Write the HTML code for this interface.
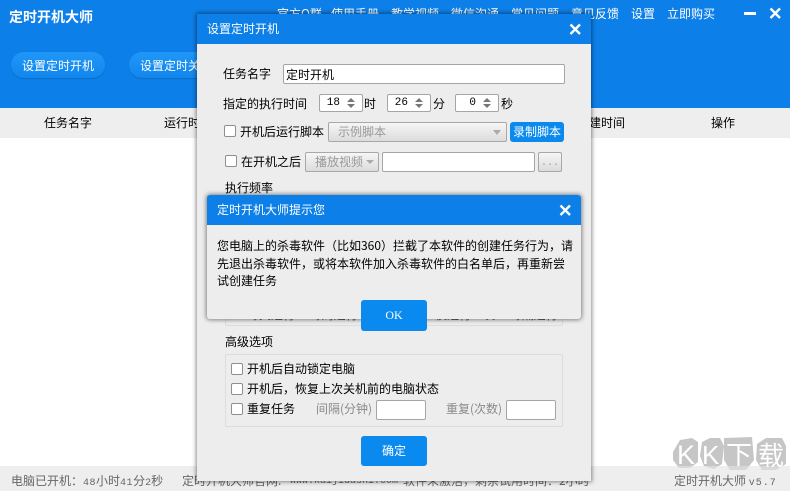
<!DOCTYPE html>
<html><head><meta charset="utf-8"><style>
html,body{margin:0;padding:0;width:790px;height:491px;overflow:hidden;background:#fff}
body{position:relative;font:12px/16px "WenQuanYi Zen Hei","Noto Sans CJK SC",sans-serif;color:#000}
.a{position:absolute;white-space:nowrap}
.n{color:#fff;top:6px;line-height:16px}
.pill{position:absolute;top:52px;height:26px;border-radius:13px;background:linear-gradient(#2097f8,#1186ee);box-shadow:0 1px 1px #0a6cc6;color:#fff;line-height:28px;text-align:center}
.inp{position:absolute;background:#fff;border:1px solid #a5a5a5;border-radius:2px;box-sizing:border-box}
.cb{position:absolute;width:12px;height:12px;box-sizing:border-box;background:#fff;border:1px solid #8f8f8f;border-radius:2px}
.spin{position:absolute;top:94px;width:44px;height:18px;box-sizing:border-box;background:#fff;border:1px solid #a5a5a5;border-radius:2px;font:11px/17px "Liberation Mono",monospace;text-align:right;padding-right:22px}
.spin:after,.spin:before{content:"";position:absolute;right:7px;border-left:4px solid transparent;border-right:4px solid transparent}
.spin:before{top:3px;border-bottom:4px solid #777}
.spin:after{top:9px;border-top:4px solid #777}
.btn{position:absolute;background:#0a8aee;color:#fff;border-radius:3px;text-align:center}
.g{color:#8a8a8a}
.gb{position:absolute;box-sizing:border-box;border:1px solid #a8a8a8;border-radius:2px;background:linear-gradient(#f6f6f6,#dcdcdc);color:#999}
.st{color:#666;top:473px}
.m{font-family:"Liberation Mono",monospace;font-size:10px}
</style></head><body>
<!-- main header -->
<div class="a" style="left:0;top:0;width:790px;height:108px;background:#0d7fe8"></div>
<div class="a" style="left:9px;top:8px;font-size:14px;font-weight:bold;color:#fff;line-height:18px">定时开机大师</div>
<div class="a n" style="left:277px">官方Q群</div>
<div class="a n" style="left:331px">使用手册</div>
<div class="a n" style="left:391px">教学视频</div>
<div class="a n" style="left:451px">微信沟通</div>
<div class="a n" style="left:511px">常见问题</div>
<div class="a n" style="left:571px">意见反馈</div>
<div class="a n" style="left:631px">设置</div>
<div class="a n" style="left:667px">立即购买</div>
<div class="a" style="left:744px;top:12px;width:12px;height:3px;background:#fff"></div>
<svg class="a" style="left:769px;top:7px" width="13" height="13"><path d="M1.5 1.5L11 11M11 1.5L1.5 11" stroke="#fff" stroke-width="2.4"/></svg>
<div class="pill" style="left:11px;width:94px">设置定时开机</div>
<div class="pill" style="left:129px;width:94px">设置定时关机</div>
<!-- table header -->
<div class="a" style="left:0;top:108px;width:790px;height:30px;background:#eee"></div>
<div class="a" style="left:44px;top:115px">任务名字</div>
<div class="a" style="left:164px;top:115px">运行时间</div>
<div class="a" style="left:577px;top:115px">创建时间</div>
<div class="a" style="left:711px;top:115px">操作</div>
<!-- status -->
<div class="a" style="left:0;top:466px;width:790px;height:25px;background:#eee"></div>
<!-- watermark -->
<svg class="a" style="left:670px;top:432px" width="120" height="59">
<g fill="#c6c6c6">
<path d="M3 20L10 8L22 6L28 10L28 30L20 36L9 36L3 28Z"/>
<path d="M32 10L40 6L50 6L54 14L52 32L44 37L34 34L30 24Z"/>
<path d="M54 6L82 5L84 28L76 38L60 38L54 28Z"/>
<path d="M87 12L96 6L112 6L116 14L116 32L106 38L92 38L86 28Z"/>
</g>
<g fill="#fff" font-family="'Liberation Sans',sans-serif">
<text x="7" y="32" font-size="27">K</text>
<text x="32" y="32" font-size="26">K</text>
<text x="56" y="32" font-size="26" font-family="'WenQuanYi Zen Hei','Noto Sans CJK SC',sans-serif">下</text>
<text x="88" y="33" font-size="26" font-family="'WenQuanYi Zen Hei','Noto Sans CJK SC',sans-serif">载</text>
</g></svg>
<div class="a" style="left:0;top:466px;width:790px;height:25px;background:rgba(238,238,238,.45)"></div>
<div class="a st" style="left:11px">电脑已开机：<span class="m" style="letter-spacing:.5px">48</span>小时<span class="m" style="letter-spacing:.5px">41</span>分<span class="m">2</span>秒</div>
<div class="a st" style="left:182px">定时开机大师官网:</div>
<div class="a st m" style="left:290px;top:474px">www.kaijidashi.com</div>
<div class="a st" style="left:403px">软件未激活，剩余试用时间：2小时</div>
<div class="a st" style="left:674px">定时开机大师 <span class="m" style="letter-spacing:1px">v5.7</span></div>

<!-- settings dialog -->
<div class="a" style="left:197px;top:14px;width:394px;height:467px;background:#ededed;box-shadow:0 0 4px 1px rgba(0,0,0,.45)"></div>
<div class="a" style="left:197px;top:14px;width:394px;height:30px;background:#0d7fe8"></div>
<div class="a" style="left:207px;top:21px;color:#fff">设置定时开机</div>
<svg class="a" style="left:569px;top:23px" width="13" height="13"><path d="M1.5 1.5L11 11M11 1.5L1.5 11" stroke="#fff" stroke-width="2.4"/></svg>

<div class="a" style="left:223px;top:66px">任务名字</div>
<div class="inp" style="left:283px;top:64px;width:282px;height:20px;padding:2px 2px;line-height:15px">定时开机</div>

<div class="a" style="left:223px;top:96px">指定的执行时间</div>
<div class="spin" style="left:319px">18</div><div class="a" style="left:364px;top:96px">时</div>
<div class="spin" style="left:387px">26</div><div class="a" style="left:433px;top:96px">分</div>
<div class="spin" style="left:455px">0</div><div class="a" style="left:501px;top:96px">秒</div>

<div class="cb" style="left:224px;top:125px"></div>
<div class="a" style="left:240px;top:124px">开机后运行脚本</div>
<div class="gb" style="left:328px;top:122px;width:179px;height:20px;padding:1px 9px;line-height:16px">示例脚本</div>
<div class="a" style="left:493px;top:130px;border-left:4px solid transparent;border-right:4px solid transparent;border-top:5px solid #aaa"></div>
<div class="btn" style="left:510px;top:122px;width:54px;height:20px;line-height:20px">录制脚本</div>

<div class="cb" style="left:225px;top:155px"></div>
<div class="a" style="left:241px;top:154px">在开机之后</div>
<div class="gb" style="left:305px;top:152px;width:74px;height:20px;padding:1px 9px;line-height:16px">播放视频</div>
<div class="a" style="left:366px;top:160px;border-left:4px solid transparent;border-right:4px solid transparent;border-top:4px solid #aaa"></div>
<div class="inp" style="left:382px;top:152px;width:153px;height:20px"></div>
<div class="gb" style="left:538px;top:152px;width:24px;height:20px;text-align:center;font:10px/21px 'Liberation Mono',monospace">...</div>

<div class="a" style="left:225px;top:180px">执行频率</div>

<div class="a" style="left:225px;top:300px;width:338px;height:26px;box-sizing:border-box;border:1px solid #ddd;border-radius:2px"></div>
<div class="a" style="left:247px;top:307px;color:#555;word-spacing:12px">每天运行 每周运行 每月运行 仅运行一次 每隔运行</div>

<div class="a" style="left:225px;top:334px">高级选项</div>
<div class="a" style="left:225px;top:354px;width:338px;height:73px;box-sizing:border-box;border:1px solid #ddd;border-radius:2px"></div>
<div class="cb" style="left:231px;top:363px"></div>
<div class="a" style="left:247px;top:361px">开机后自动锁定电脑</div>
<div class="cb" style="left:231px;top:383px"></div>
<div class="a" style="left:247px;top:381px">开机后，恢复上次关机前的电脑状态</div>
<div class="cb" style="left:231px;top:403px"></div>
<div class="a" style="left:247px;top:401px">重复任务</div>
<div class="a g" style="left:316px;top:401px">间隔(分钟)</div>
<div class="inp" style="left:376px;top:400px;width:50px;height:20px"></div>
<div class="a g" style="left:446px;top:401px">重复(次数)</div>
<div class="inp" style="left:506px;top:400px;width:50px;height:20px"></div>
<div class="btn" style="left:361px;top:436px;width:66px;height:30px;line-height:30px">确定</div>

<!-- alert -->
<div class="a" style="left:207px;top:195px;width:374px;height:124px;background:#ededed;border-radius:3px;box-shadow:0 0 4px 1px rgba(0,0,0,.45)"></div>
<div class="a" style="left:207px;top:195px;width:374px;height:30px;background:#0d7fe8;border-radius:3px 3px 0 0"></div>
<div class="a" style="left:217px;top:202px;color:#fff">定时开机大师提示您</div>
<svg class="a" style="left:559px;top:204px" width="13" height="13"><path d="M1.5 1.5L11 11M11 1.5L1.5 11" stroke="#fff" stroke-width="2.4"/></svg>
<div class="a" style="left:217px;top:237px;line-height:17.5px">您电脑上的杀毒软件（比如360）拦截了本软件的创建任务行为，请<br>先退出杀毒软件，或将本软件加入杀毒软件的白名单后，再重新尝<br>试创建任务</div>
<div class="btn" style="left:361px;top:300px;width:66px;height:31px;line-height:30px;font-family:'Liberation Serif',serif;font-size:12px">OK</div>
</body></html>
